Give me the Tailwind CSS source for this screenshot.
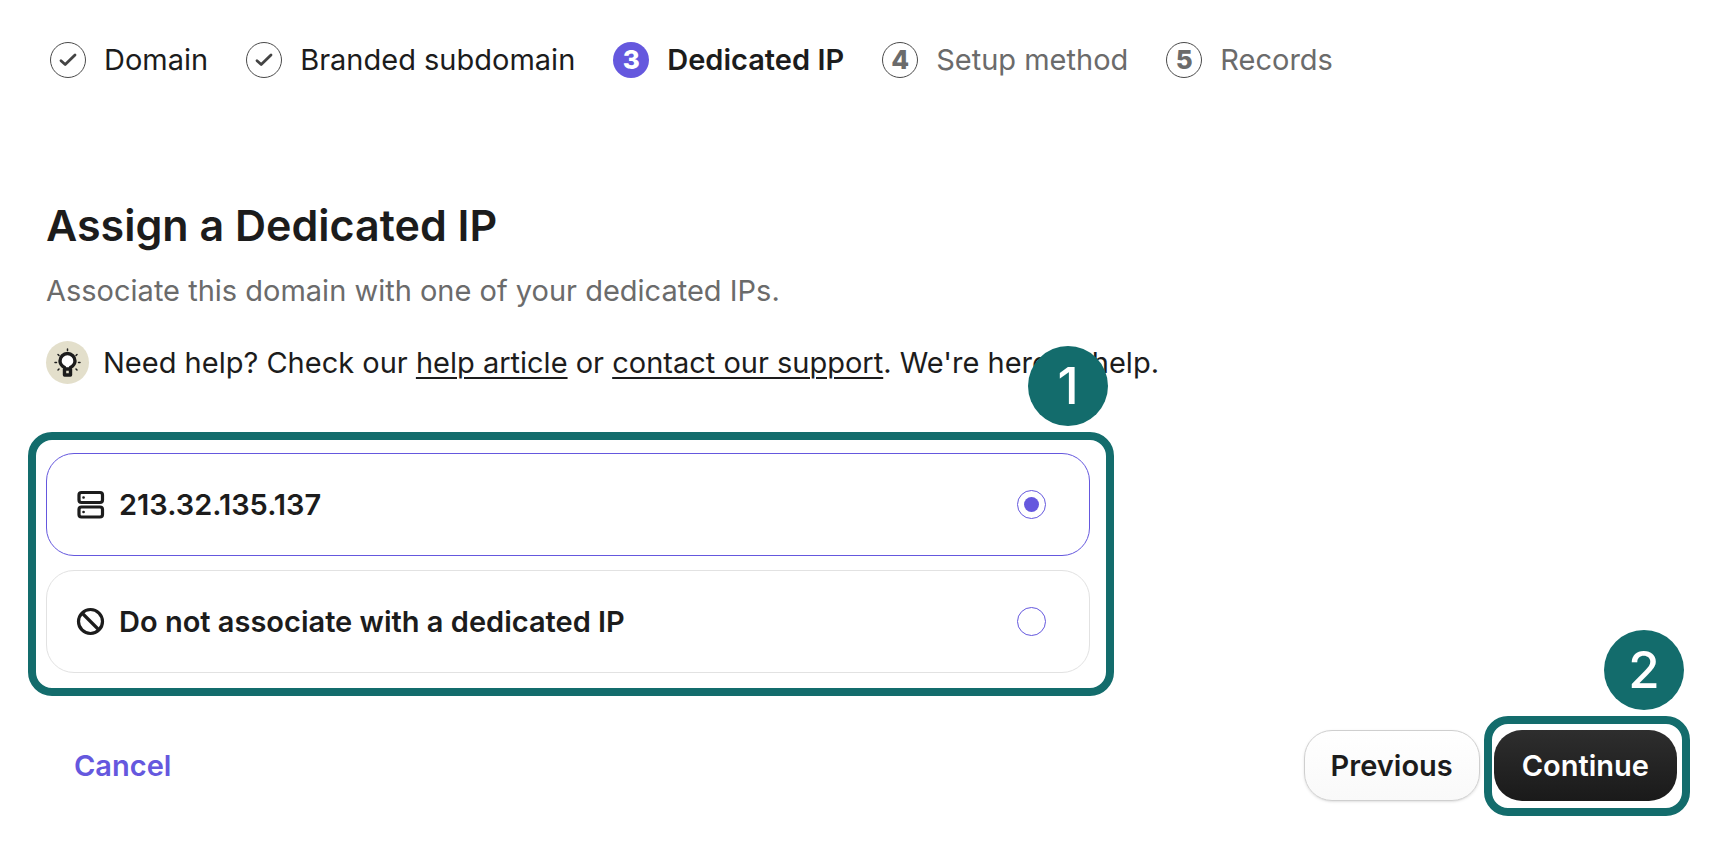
<!DOCTYPE html>
<html lang="en">
<head>
    <meta charset="UTF-8">
    <meta name="viewport" content="width=device-width, initial-scale=1.0">
    <title>Assign a Dedicated IP</title>
    <script src="https://cdn.jsdelivr.net/npm/@tailwindcss/browser@4"></script>
</head>
<body class="bg-white font-[Inter,sans-serif] text-[29px] leading-9 text-[#1c1c1c]">
    <!-- Progress steps -->
    <nav class="pl-[50px] pt-[42px]" aria-label="Progress">
        <ol class="flex items-center gap-[38px] whitespace-nowrap">
            <li class="flex items-center gap-[18px]">
                <span class="flex size-9 items-center justify-center rounded-full border border-[#4a4a4a]">
                    <svg class="size-5" viewBox="0 0 20 20" fill="none" stroke="#444" stroke-width="2.8" stroke-linecap="round" stroke-linejoin="round"><path d="M3 10.8l4.200 3.700L17 5" /></svg>
                </span>
                <span>Domain</span>
            </li>
            <li class="flex items-center gap-[18px]">
                <span class="flex size-9 items-center justify-center rounded-full border border-[#4a4a4a]">
                    <svg class="size-5" viewBox="0 0 20 20" fill="none" stroke="#444" stroke-width="2.8" stroke-linecap="round" stroke-linejoin="round"><path d="M3 10.8l4.200 3.700L17 5" /></svg>
                </span>
                <span>Branded subdomain</span>
            </li>
            <li class="flex items-center gap-[18px] font-semibold" aria-current="step">
                <span class="flex size-9 items-center justify-center rounded-full bg-[#6558de] text-[26px] font-extrabold text-white">3</span>
                <span>Dedicated IP</span>
            </li>
            <li class="flex items-center gap-[18px] text-[#6b6b6b]">
                <span class="flex size-9 items-center justify-center rounded-full border border-[#4a4a4a] text-[26px] font-extrabold">4</span>
                <span>Setup method</span>
            </li>
            <li class="flex items-center gap-[18px] text-[#6b6b6b]">
                <span class="flex size-9 items-center justify-center rounded-full border border-[#4a4a4a] text-[26px] font-extrabold">5</span>
                <span>Records</span>
            </li>
        </ol>
    </nav>

    <main class="pl-[46px] pt-[121px]">
        <h1 class="text-[43px] font-semibold leading-[52px]">Assign a Dedicated IP</h1>
        <p class="mt-[22px] text-[#6b6b6b]">Associate this domain with one of your dedicated IPs.</p>
        <div class="mt-8 flex items-center gap-[14px]">
            <span class="flex size-[43px] items-center justify-center rounded-full bg-[#e3dfcb]">
                <svg class="size-[43px]" viewBox="0 0 43 43" fill="none" stroke="#1c1c1c" stroke-linecap="round" stroke-linejoin="round">
                    <path fill="#fff" stroke-width="3.4" d="M18.500 28v-1.500c-2.500-1.500-4.500-3.500-4.500-6.500a7.500 7.500 0 0 1 15 0c0 3-2 5-4.500 6.500v1.500z" />
                    <path stroke-width="3.4" d="M18.500 28.500v5.500h6v-5.500" />
                    <path stroke-width="1.5" d="M21.500 8v1.500M9 21.500h1.500M32.500 21.500H34M12 13.500l1 1M31 13.500l-1 1M12 29l1-1M31 29l-1-1" />
                </svg>
            </span>
            <p>Need help? Check our <a href="#" class="underline decoration-2 underline-offset-4">help article</a> or <a href="#" class="underline decoration-2 underline-offset-4">contact our support</a>. We're here to help.</p>
        </div>
    </main>

    <form>
        <!-- Dedicated IP options -->
        <fieldset aria-label="Dedicated IP" class="relative ml-7 mt-12 flex w-[1086px] max-w-full flex-col gap-[14px] rounded-[24px] border-8 border-[#136c6c] pt-[13px] pr-4 pb-[15px] pl-[10px] font-semibold">
            <span class="absolute -top-[94px] right-[-2px] flex size-20 items-center justify-center rounded-full bg-[#136c6c] text-[51px] font-medium text-white">1</span>
            <label for="ip" class="flex h-[103px] items-center rounded-[28px] border border-[#6558de] pl-[29px] pr-[43px]">
                <svg class="size-[30px]" viewBox="0 0 30 30" fill="none" stroke="#1c1c1c" stroke-width="3.2"><rect x="3" y="2.500" width="23.500" height="10" rx="2.500" /><rect x="3" y="17" width="23.500" height="10" rx="2.500" /><path stroke-width="2.6" stroke-linecap="round" d="M7.500 7.500h.1M7.500 22h.1" /></svg>
                <span class="ml-[13px] flex-1">213.32.135.137</span>
                <input id="ip" name="dedicated-ip" type="radio" checked class="size-[29px] appearance-none rounded-full border border-[#6558de] p-[6px] checked:bg-[#6558de] checked:bg-clip-content">
            </label>
            <label for="none" class="flex h-[103px] items-center rounded-[28px] border border-[#e2e2e2] pl-[29px] pr-[43px]">
                <svg class="size-[30px]" viewBox="0 0 30 30" fill="none" stroke="#1c1c1c" stroke-width="3.2"><circle cx="14.500" cy="14.500" r="12" /><path d="M6 6l17 17" /></svg>
                <span class="ml-[13px] flex-1">Do not associate with a dedicated IP</span>
                <input id="none" name="dedicated-ip" type="radio" class="size-[29px] appearance-none rounded-full border border-[#6558de] p-[6px] checked:bg-[#6558de] checked:bg-clip-content">
            </label>
        </fieldset>

        <!-- Actions -->
        <div class="mt-5 flex items-center pl-[74px] pr-5 font-semibold">
            <button type="button" class="text-[#6558de]">Cancel</button>
            <button type="button" class="mb-px ml-auto mr-1 h-[71px] rounded-[28px] border border-[#cfcfcf] bg-linear-to-b from-white to-[#f9f9f9] px-[26px] shadow-sm">Previous</button>
            <div class="relative rounded-[24px] border-8 border-[#136c6c] pt-[6px] pr-[5px] pb-[7px] pl-[2px]">
                <span class="absolute -top-[94px] right-[-2px] flex size-20 items-center justify-center rounded-full bg-[#136c6c] text-[51px] font-medium text-white">2</span>
                <button type="submit" class="h-[71px] rounded-[28px] bg-linear-to-b from-[#2e2e2e] to-[#1a1a1a] px-7 text-white">Continue</button>
            </div>
        </div>
    </form>
</body>
</html>
